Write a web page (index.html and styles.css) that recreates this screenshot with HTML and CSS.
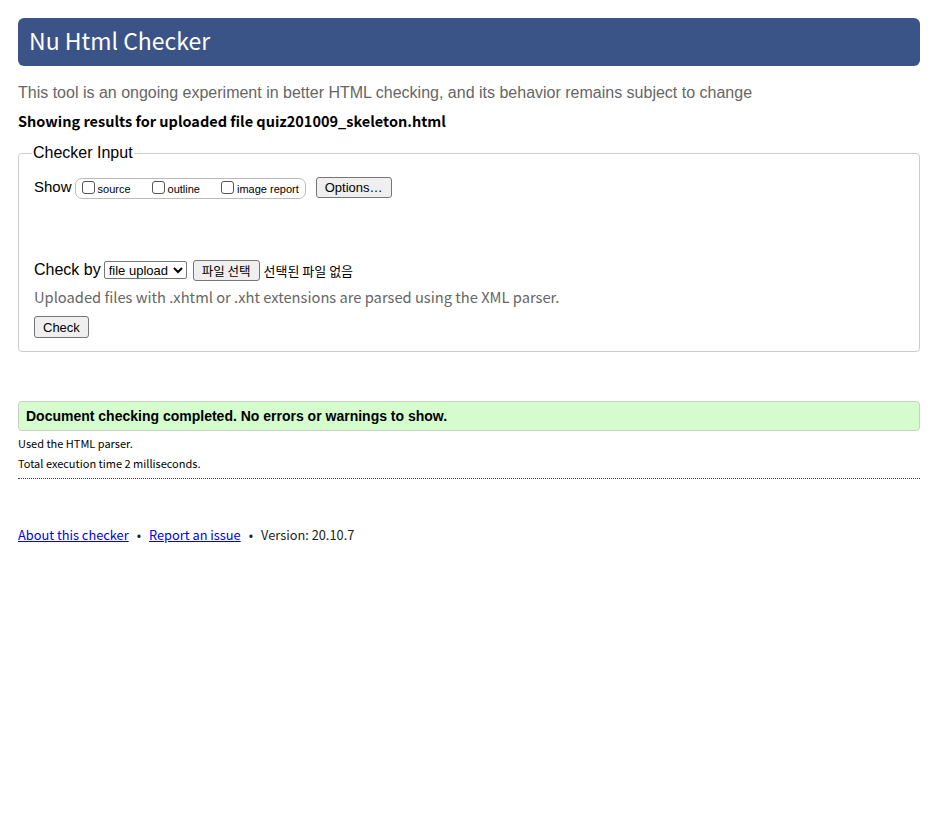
FILE: index.html
```html
<!DOCTYPE html>
<html lang="en">
<head>
<meta charset="utf-8">
<title>Nu Html Checker</title>
<link rel="stylesheet" href="styles.css">
</head>
<body>
<div class="page">
  <h1 class="masthead">Nu Html Checker</h1>
  <p class="intro">This tool is an ongoing experiment in better HTML checking, and its behavior remains subject to change</p>
  <p class="showing">Showing results for uploaded file quiz201009_skeleton.html</p>

  <fieldset class="input">
    <legend class="legend">Checker Input</legend>
    <div class="show-row">
      <span class="show-label">Show</span>
      <span class="show-group">
        <label class="opt"><input type="checkbox" class="cb">source</label>
        <label class="opt"><input type="checkbox" class="cb">outline</label>
        <label class="opt opt-last"><input type="checkbox" class="cb">image report</label>
      </span>
      <button class="btn btn-options" type="button">Options…</button>
    </div>
    <div class="checkby-row">
      <span class="checkby-label">Check by</span>
      <select class="sel"><option>file upload</option></select>
      <span class="file-btn">파일 선택</span>
      <span class="file-none">선택된 파일 없음</span>
    </div>
    <p class="hint">Uploaded files with .xhtml or .xht extensions are parsed using the XML parser.</p>
    <button class="btn btn-check" type="button">Check</button>
  </fieldset>

  <div class="result">Document checking completed. No errors or warnings to show.</div>
  <p class="meta">Used the HTML parser.</p>
  <p class="meta">Total execution time 2 milliseconds.</p>
  <hr class="rule">

  <p class="footer"><a href="#">About this checker</a><span class="dot">•</span><a href="#">Report an issue</a><span class="dot">•</span>Version: 20.10.7</p>
</div>
</body>
</html>
```

FILE: styles.css
```css
html, body { margin: 0; padding: 0; background: #fff; }
body { font-family: "Noto Sans CJK KR", "Noto Sans", sans-serif; color: #000; }
.page { padding: 18px 13px 0 18px; }

.masthead {
  margin: 0;
  height: 48px;
  box-sizing: border-box;
  background: #3b5488;
  border-radius: 6px;
  color: #fff;
  font-weight: normal;
  font-size: 23px;
  line-height: 45px;
  padding-left: 11px;
  font-family: "Noto Sans CJK KR", "Noto Sans", sans-serif;
}

.intro {
  margin: 17px 0 0;
  font-family: "Liberation Sans", Arial, sans-serif;
  font-size: 16px;
  line-height: 20px;
  color: #666;
}
.showing {
  margin: 8px 0 0;
  font-size: 14.5px;
  font-weight: bold;
  line-height: 20px;
}

.input {
  margin: 13px 0 0;
  border: 1px solid #ccc;
  border-radius: 4px;
  padding: 14px 15px 13px 15px;
  min-width: 0;
}
.legend {
  font-family: "Liberation Sans", Arial, sans-serif;
  font-size: 16px;
  padding: 0 1px;
  margin-left: -2px;
}

.show-row {
  display: flex;
  align-items: center;
  height: 22px;
}
.show-label, .checkby-label {
  font-family: "Liberation Sans", Arial, sans-serif;
  font-size: 16px;
  margin-right: 3px;
}
.show-label { font-size: 15px; margin-right: 3px; margin-top: -2px; }
.show-group {
  display: inline-flex;
  align-items: center;
  height: 19px;
  border: 1px solid #bbb;
  border-radius: 7px;
  padding: 0 6px 0 5px;
  margin-top: 2px;
}
.opt {
  display: inline-flex;
  align-items: center;
  font-family: "Liberation Sans", Arial, sans-serif;
  font-size: 11px;
  margin-right: 20px;
  padding-top: 2px;
}
.opt-last { margin-right: 0; }
.cb {
  width: 13px;
  height: 13px;
  margin: 0 3px 4px 1px;
  appearance: none;
  -webkit-appearance: none;
  border: 1px solid #555;
  border-radius: 3px;
  background: #fff;
  box-sizing: border-box;
}
.btn {
  font-family: "Liberation Sans", Arial, sans-serif;
  font-size: 13px;
  background: #efefef;
  border: 1px solid #767676;
  border-radius: 3px;
  padding: 0 8px;
  height: 21px;
  color: #000;
}
.btn-options { margin-left: 10px; }
.btn-check { height: 22px; }

.checkby-row {
  display: flex;
  align-items: center;
  margin-top: 61px;
  height: 22px;
}
.checkby-label { margin-right: 3px; }
.sel {
  font-family: "Liberation Sans", Arial, sans-serif;
  font-size: 13px;
  height: 18px;
  padding: 0;
  border: 1px solid #767676;
  border-radius: 2px;
  background: #fff;
  color: #000;
  width: 83px;
}
.file-btn {
  display: inline-flex;
  align-items: center;
  margin-left: 6px;
  height: 21px;
  box-sizing: border-box;
  padding: 0 8px;
  background: #efefef;
  border: 1px solid #767676;
  border-radius: 3px;
  font-size: 12.5px;
}
.file-none { font-size: 13px; margin-left: 4px; }

.hint {
  margin: 6px 0 0;
  font-size: 14.7px;
  line-height: 20px;
  color: #666;
}
.btn-check { margin-top: 9px; }

.result {
  margin-top: 49px;
  height: 30px;
  box-sizing: border-box;
  background: #d4fccc;
  border: 1px solid #ccc;
  border-radius: 4px;
  padding-left: 7px;
  font-family: "Liberation Sans", Arial, sans-serif;
  font-weight: bold;
  font-size: 14px;
  line-height: 28px;
}
.meta {
  margin: 0;
  font-size: 11px;
  line-height: 20px;
}
.result + .meta { margin-top: 2px; }
.rule {
  margin: 5px 0 0;
  border: 0;
  border-top: 1px dotted #444;
  height: 0;
}
.footer {
  margin: 46px 0 0;
  font-size: 12.8px;
  line-height: 20px;
  color: #222;
}
.footer a { color: #0000ee; text-decoration: underline; }
.dot { margin: 0 8px; }
```
